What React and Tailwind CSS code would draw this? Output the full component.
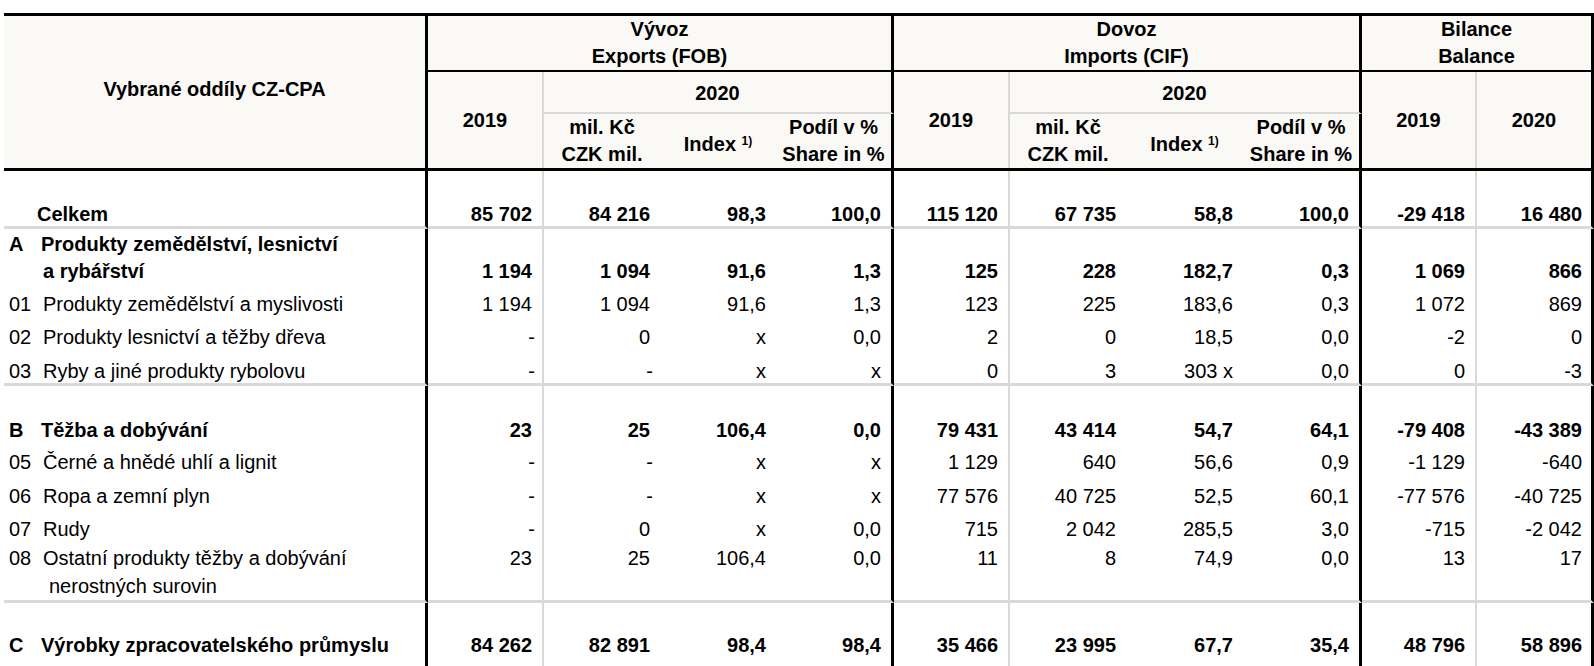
const GRID =
  "grid grid-cols-[424px_116px_116px_116px_118px_116px_116px_117px_119px_115px_117px]";

// right border of every column, thick black between blocks, light grey after each 2019 column
const RIGHT = [
  "border-r-[3px] border-r-black",
  "border-r-2 border-r-[#d9d9d9]",
  "",
  "",
  "border-r-[3px] border-r-black",
  "border-r-2 border-r-[#d9d9d9]",
  "",
  "",
  "border-r-[3px] border-r-black",
  "border-r-2 border-r-[#d9d9d9]",
  "border-r-[3px] border-r-black",
];

const rows = [
  {
    name: "Celkem",
    bold: true,
    total: true,
    h: "h-[58px]",
    align: "items-end",
    end: true,
    v: ["85 702", "84 216", "98,3", "100,0", "115 120", "67 735", "58,8", "100,0", "-29 418", "16 480"],
  },
  {
    code: "A",
    name: "Produkty zemědělství, lesnictví",
    more: "a rybářství",
    moreIndent: "pl-[34px]",
    bold: true,
    h: "h-[54px]",
    align: "items-end",
    v: ["1 194", "1 094", "91,6", "1,3", "125", "228", "182,7", "0,3", "1 069", "866"],
  },
  {
    code: "01",
    name: "Produkty zemědělství a myslivosti",
    h: "h-[33px]",
    align: "items-end",
    v: ["1 194", "1 094", "91,6", "1,3", "123", "225", "183,6", "0,3", "1 072", "869"],
  },
  {
    code: "02",
    name: "Produkty lesnictví a těžby dřeva",
    h: "h-[33px]",
    align: "items-end",
    v: ["-", "0", "x", "0,0", "2", "0", "18,5", "0,0", "-2", "0"],
  },
  {
    code: "03",
    name: "Ryby a jiné produkty rybolovu",
    h: "h-[37px]",
    align: "items-end",
    end: true,
    v: ["-", "-", "x", "x", "0", "3", "303 x", "0,0", "0", "-3"],
  },
  {
    code: "B",
    name: "Těžba a dobývání",
    bold: true,
    h: "h-[56px]",
    align: "items-end",
    v: ["23", "25", "106,4", "0,0", "79 431", "43 414", "54,7", "64,1", "-79 408", "-43 389"],
  },
  {
    code: "05",
    name: "Černé a hnědé uhlí a lignit",
    h: "h-[32px]",
    align: "items-end",
    v: ["-", "-", "x", "x", "1 129", "640", "56,6", "0,9", "-1 129", "-640"],
  },
  {
    code: "06",
    name: "Ropa a zemní plyn",
    h: "h-[34px]",
    align: "items-end",
    v: ["-", "-", "x", "x", "77 576", "40 725", "52,5", "60,1", "-77 576", "-40 725"],
  },
  {
    code: "07",
    name: "Rudy",
    h: "h-[33px]",
    align: "items-end",
    v: ["-", "0", "x", "0,0", "715", "2 042", "285,5", "3,0", "-715", "-2 042"],
  },
  {
    code: "08",
    name: "Ostatní produkty těžby a dobývání",
    more: "nerostných surovin",
    moreIndent: "pl-[40px]",
    h: "h-[62px]",
    align: "items-start pt-[5px]",
    end: true,
    v: ["23", "25", "106,4", "0,0", "11", "8", "74,9", "0,0", "13", "17"],
  },
  {
    code: "C",
    name: "Výrobky zpracovatelského průmyslu",
    bold: true,
    h: "h-[90px]",
    align: "items-start pt-[30px]",
    v: ["84 262", "82 891", "98,4", "98,4", "35 466", "23 995", "67,7", "35,4", "48 796", "58 896"],
  },
];

function Label({ row }) {
  return (
    <div className={`flex flex-col pl-[5px] ${row.bold ? "font-bold" : ""}`}>
      {row.total ? (
        <div className="pl-[28px]">{row.name}</div>
      ) : (
        <div className={`flex ${row.more && row.bold ? "mb-[3px]" : ""} ${row.more && !row.bold ? "mb-[4px]" : ""}`}>
          <span className={row.bold ? "w-[32px]" : "w-[34px]"}>{row.code}</span>
          <span>{row.name}</span>
        </div>
      )}
      {row.more && <div className={row.moreIndent}>{row.more}</div>}
    </div>
  );
}

function BodyRow({ row }) {
  const bottom = row.end ? "border-b-[3px] border-b-[#d9d9d9]" : "";
  return (
    <div className={`${GRID} ${row.h}`}>
      <div className={`flex ${row.align} ${RIGHT[0]} ${bottom}`}>
        <Label row={row} />
      </div>
      {row.v.map((val, i) => (
        <div
          key={i}
          className={`flex justify-end ${row.align} ${RIGHT[i + 1]} ${bottom} ${
            val === "-" ? "pr-[7px]" : i === 9 ? "pr-[9px]" : "pr-[10px]"
          } ${row.bold ? "font-bold" : ""}`}
        >
          {val}
        </div>
      ))}
    </div>
  );
}

function SubHeads({ last }) {
  return (
    <>
      <div className="flex flex-col items-center justify-center leading-[27px]">
        <span>mil. Kč</span>
        <span>CZK mil.</span>
      </div>
      <div className="flex items-center justify-center pt-[6px]">
        <span>
          Index <sup className="text-[12px]">1)</sup>
        </span>
      </div>
      <div className={`flex flex-col items-center justify-center leading-[27px] ${last}`}>
        <span>Podíl v %</span>
        <span>Share in %</span>
      </div>
    </>
  );
}

export default function App() {
  return (
    <div
      className="h-[666px] w-[1594px] overflow-hidden bg-white pl-[4px] pt-[13px] text-[20px] leading-[24px] text-black"
      style={{ fontFamily: '"Liberation Sans", Arial, sans-serif' }}
    >
      {/* Header */}
      <div
        className={`${GRID} grid-rows-[56px_42px_54px] border-t-[3px] border-b-[3px] border-black bg-[#faf9f6] font-bold`}
      >
        <div className="row-span-3 flex items-center justify-center border-r-[3px] border-r-black pb-[6px]">
          Vybrané oddíly CZ-CPA
        </div>
        <div className="col-span-4 flex flex-col items-center justify-center border-b-2 border-r-[3px] border-black leading-[27px]">
          <span>Vývoz</span>
          <span>Exports (FOB)</span>
        </div>
        <div className="col-span-4 flex flex-col items-center justify-center border-b-2 border-r-[3px] border-black leading-[27px]">
          <span>Dovoz</span>
          <span>Imports (CIF)</span>
        </div>
        <div className="col-span-2 flex flex-col items-center justify-center border-b-2 border-r-[3px] border-black leading-[27px]">
          <span>Bilance</span>
          <span>Balance</span>
        </div>

        <div className="row-span-2 flex items-center justify-center border-r-2 border-r-[#d9d9d9]">2019</div>
        <div className="col-span-3 flex items-center justify-center border-b-2 border-b-[#d9d9d9] border-r-[3px] border-r-black pt-[2px]">
          2020
        </div>
        <div className="row-span-2 flex items-center justify-center border-r-2 border-r-[#d9d9d9]">2019</div>
        <div className="col-span-3 flex items-center justify-center border-b-2 border-b-[#d9d9d9] border-r-[3px] border-r-black pt-[2px]">
          2020
        </div>
        <div className="row-span-2 flex items-center justify-center border-r-2 border-r-[#d9d9d9]">2019</div>
        <div className="row-span-2 flex items-center justify-center border-r-[3px] border-r-black">2020</div>

        <SubHeads last="border-r-[3px] border-r-black" />
        <SubHeads last="border-r-[3px] border-r-black" />
      </div>

      {/* Body */}
      <div className="whitespace-nowrap">
        {rows.map((row, i) => (
          <BodyRow key={i} row={row} />
        ))}
      </div>
    </div>
  );
}
